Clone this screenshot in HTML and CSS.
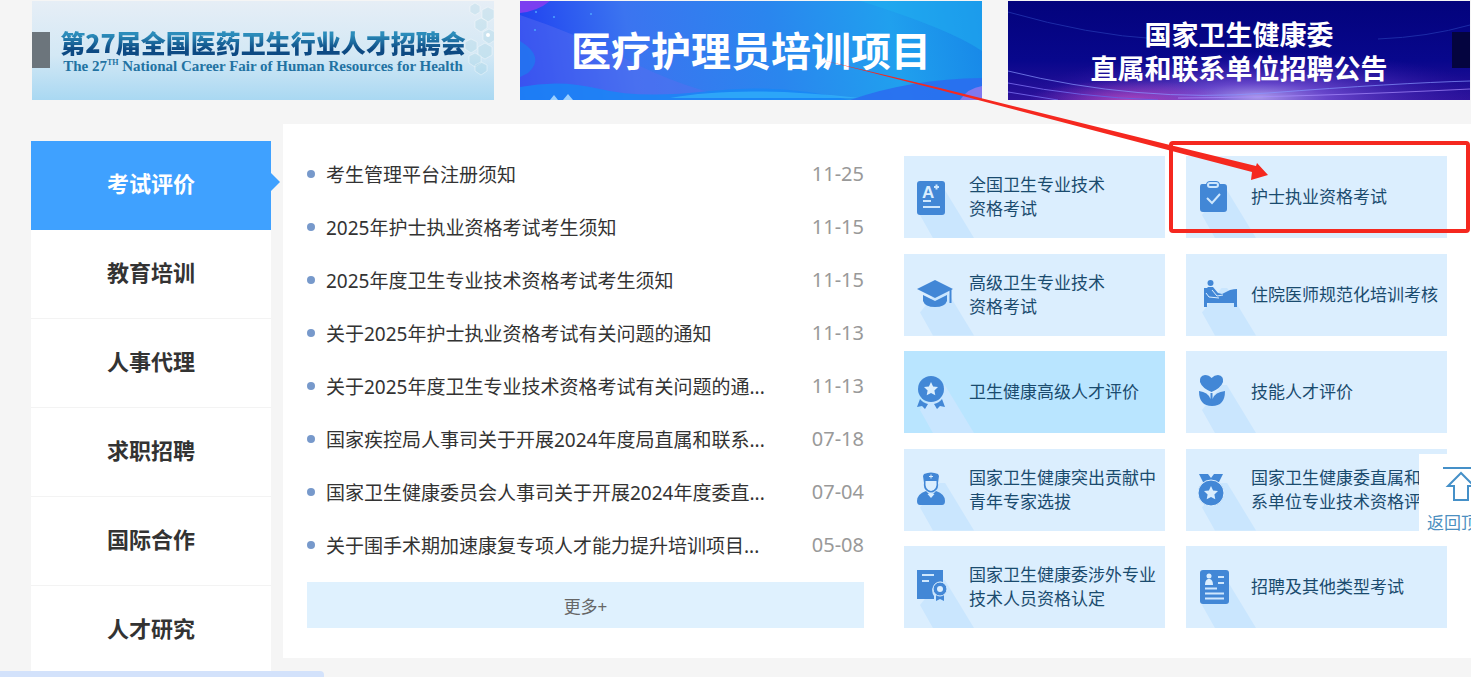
FILE: index.html
```html
<!DOCTYPE html>
<html lang="zh-CN">
<head>
<meta charset="utf-8">
<title>考试评价</title>
<link rel="stylesheet" href="styles.css">
</head>
<body>
<div class="page">
  <section class="banners">
    <a class="banner fair" href="#">
      <svg class="art" viewBox="0 0 462 99" preserveAspectRatio="none" aria-hidden="true">
        <g fill="#9ccfdf" fill-opacity=".25" stroke="#fff" stroke-opacity=".4">
          <path d="M456 6l6 3v8l-6 4-6-4V9z"/><path d="M449 17l6 3v7l-6 4-6-4v-7z"/><path d="M457 28l6 3v8l-6 4-6-4v-8z"/>
          <path d="M439 38l6 3v7l-6 4-6-4v-7z"/><path d="M453 42l7 4v8l-7 4-7-4v-8z"/><path d="M443 52l6 3v7l-6 4-6-4v-7z"/><path d="M449 61l6 3v6l-6 4-6-4v-6z"/>
          <path d="M443 2l5 3v6l-5 3-5-3V5z"/>
        </g>
        <circle cx="456" cy="34" r="2" fill="#fff"/>
      </svg>
      <span class="prev"></span>
      <strong class="fair-title">第27届全国医药卫生行业人才招聘会</strong>
      <span class="fair-sub">The 27<sup>TH</sup> National Career Fair of Human Resources for Health</span>
    </a>
    <a class="banner nursing" href="#">
      <svg class="art" viewBox="0 0 462 99" preserveAspectRatio="none" aria-hidden="true">
        <path d="M0 14Q60 34 110 60T220 99H0z" fill="#5a6cf0" opacity=".45"/>
        <path d="M0 0h30Q18 10 0 12z" fill="#7b3ff0"/>
        <path d="M0 40q26 16 8 32l-8 4z" fill="#1c7cf0" opacity=".7"/>
        <path d="M0 86Q40 78 80 88T190 90T330 99H0z" fill="#1687f6" opacity=".8"/>
        <path d="M150 97Q220 84 340 97z" fill="#35b4fa" opacity=".7"/>
        <path d="M330 99Q390 78 462 77v22z" fill="#2a6ef0" opacity=".9"/>
        <path d="M440 99q8-12 22-14v14z" fill="#7f78f0"/>
        <path d="M462 0v50Q430 28 340 0z" fill="#1faff0" opacity=".5"/>
        <path d="M30 99l4-5 4 5zM43 99l5-6 5 6z" fill="#9cd0ff"/>
        <g fill="#4da4ff"><circle cx="16" cy="11" r="1"/><circle cx="34" cy="16" r="1"/><circle cx="15" cy="29" r="1"/><circle cx="71" cy="13" r="1"/></g>
      </svg>
      <strong class="nursing-title">医疗护理员培训项目</strong>
    </a>
    <a class="banner recruit" href="#">
      <svg class="art" viewBox="0 0 462 99" preserveAspectRatio="none" aria-hidden="true">
        <defs>
          <radialGradient id="glow" cx=".5" cy=".5" r=".5"><stop offset="0" stop-color="#cbbcff"/><stop offset=".3" stop-color="#8a62e6" stop-opacity=".8"/><stop offset="1" stop-color="#3a17b0" stop-opacity="0"/></radialGradient>
          <radialGradient id="pink" cx=".5" cy=".5" r=".5"><stop offset="0" stop-color="#c04ac0"/><stop offset="1" stop-color="#b13fc0" stop-opacity="0"/></radialGradient>
        </defs>
        <ellipse cx="250" cy="96" rx="230" ry="46" fill="url(#glow)" opacity=".8"/>
        <ellipse cx="120" cy="99" rx="100" ry="20" fill="url(#pink)" opacity=".8"/>
        <g fill="none">
          <path d="M0 11Q80 34 150 38M462 24Q420 36 370 38" stroke="#1c2ba6"/>
          <path d="M0 70Q130 102 260 92T462 80" stroke="#8796ff" opacity=".7"/>
          <path d="M0 82Q70 96 150 99M0 91l50 8" stroke="#6a5ce0"/>
          <path d="M170 97Q300 96 462 88" stroke="#a88cff" opacity=".7"/>
        </g>
      </svg>
      <strong class="recruit-title">国家卫生健康委<br>直属和联系单位招聘公告</strong>
      <span class="next"></span>
    </a>
  </section>

  <main class="main">
    <nav class="side">
      <a class="side-item active" href="#">考试评价</a>
      <a class="side-item" href="#">教育培训</a>
      <a class="side-item" href="#">人事代理</a>
      <a class="side-item" href="#">求职招聘</a>
      <a class="side-item" href="#">国际合作</a>
      <a class="side-item" href="#">人才研究</a>
    </nav>
    <section class="panel">
      <div class="news">
        <ul class="news-list">
          <li><a href="#">考生管理平台注册须知</a><time>11-25</time></li>
          <li><a href="#">2025年护士执业资格考试考生须知</a><time>11-15</time></li>
          <li><a href="#">2025年度卫生专业技术资格考试考生须知</a><time>11-15</time></li>
          <li><a href="#">关于2025年护士执业资格考试有关问题的通知</a><time>11-13</time></li>
          <li><a href="#">关于2025年度卫生专业技术资格考试有关问题的通...</a><time>11-13</time></li>
          <li><a href="#">国家疾控局人事司关于开展2024年度局直属和联系...</a><time>07-18</time></li>
          <li><a href="#">国家卫生健康委员会人事司关于开展2024年度委直...</a><time>07-04</time></li>
          <li><a href="#">关于围手术期加速康复专项人才能力提升培训项目...</a><time>05-08</time></li>
        </ul>
        <a class="more" href="#">更多+</a>
      </div>
      <div class="tiles">
        <a class="tile" href="#">
          <svg class="icon" viewBox="0 0 40 40" aria-hidden="true"><rect x="1" y="4" width="28" height="34" rx="3"/><text class="grade" x="6" y="21">A</text><g class="line"><path d="M18 10h5M20.500 7.500v5M7 24h8M7 30h17"/></g></svg>
          <span>全国卫生专业技术<br>资格考试</span>
        </a>
        <a class="tile" href="#">
          <svg class="icon" viewBox="0 0 40 40" aria-hidden="true"><path d="M4 7h4q1-3 4-3h6q3 0 4 3h4q3 0 3 3v22q0 3-3 3H5q-3 0-3-3V10q0-3 2-3z"/><rect class="line" x="10" y="6" width="10" height="4" rx="2"/><path class="line" d="M9 21l5 5 8-9"/></svg>
          <span>护士执业资格考试</span>
        </a>
        <a class="tile" href="#">
          <svg class="icon" viewBox="0 0 40 40" aria-hidden="true"><path d="M1 14L19 5l18 9-18 9z"/><path d="M7 20l12 6 12-6v6q-2 6-12 6T7 26z"/><path class="ink" d="M34.500 14v14"/></svg>
          <span>高级卫生专业技术<br>资格考试</span>
        </a>
        <a class="tile" href="#">
          <svg class="icon" viewBox="0 0 40 40" aria-hidden="true"><circle cx="12.500" cy="8" r="3"/><path d="M6 13h3l1-1h5l5 6 4 1 8-4q4-1 7-1v18h-3v-4H9v4H6z"/><path class="thin" d="M14 15l5 6 6-1M8 18l3 4 10 1"/></svg>
          <span>住院医师规范化培训考核</span>
        </a>
        <a class="tile highlight" href="#">
          <svg class="icon" viewBox="0 0 40 40" aria-hidden="true"><circle cx="15" cy="17" r="13"/><path class="hole" d="M15 10l2.100 4.500 4.900.6-3.600 3.300.9 4.900-4.300-2.400-4.300 2.400.9-4.900L8 15.100l4.900-.6z"/><path d="M4 27q3 4 8 5l-3 5-3-3-5 1zM26 27q-3 4-8 5l3 5 3-3 5 1z"/></svg>
          <span>卫生健康高级人才评价</span>
        </a>
        <a class="tile" href="#">
          <svg class="icon" viewBox="0 0 40 40" aria-hidden="true"><path d="M13.500 6q3-3 6.500-3 6 1 5 7-2 6-11.500 10Q4 16 2 10 1 4 7 3q4 0 6.500 3z"/><path d="M1 19q9 1 11.500 8v-6h2v6Q17 20 27 19q0 15-13 15T1 19z"/></svg>
          <span>技能人才评价</span>
        </a>
        <a class="tile" href="#">
          <svg class="icon" viewBox="0 0 40 40" aria-hidden="true"><path d="M8 4q7-3 14 0l1 2-1 7q1 5-3 8-4 3-8 0-4-3-3-8L7 6z"/><path class="hole" d="M9.500 11h11q1 9-5.500 10-6.500-1-5.500-10z"/><path class="thin" d="M15 4.500v4M13 6.500h4"/><path d="M10 21l5 5 5-5q9 3 9 10 0 4-3 4H4q-3 0-3-4 0-7 9-10z"/><path class="hole" d="M11.500 24h7L15 28z"/></svg>
          <span>国家卫生健康突出贡献中<br>青年专家选拔</span>
        </a>
        <a class="tile" href="#">
          <svg class="icon" viewBox="0 0 40 40" aria-hidden="true"><path d="M1 4h9l3 4 3-4h9l-4 8H5z"/><circle class="ring" cx="13" cy="23" r="13"/><path class="hole" d="M13 16l2.100 4.500 4.900.6-3.600 3.300.9 4.900-4.300-2.400-4.300 2.400.9-4.900L6 21.100l4.900-.6z"/></svg>
          <span>国家卫生健康委直属和联<br>系单位专业技术资格评审</span>
        </a>
        <a class="tile" href="#">
          <svg class="icon" viewBox="0 0 40 40" aria-hidden="true"><path d="M1 3h26v12a9 9 0 0 0-9 14v3H1z"/><path class="line" d="M6 8h12M6 14h7"/><path d="M20 27h8v7l-4-2-4 2z"/><circle class="ring" cx="24" cy="22" r="7"/><circle class="hole" cx="24" cy="22" r="3"/></svg>
          <span>国家卫生健康委涉外专业<br>技术人员资格认定</span>
        </a>
        <a class="tile" href="#">
          <svg class="icon" viewBox="0 0 40 40" aria-hidden="true"><rect x="2" y="3" width="29" height="34" rx="3"/><circle class="hole" cx="11" cy="9" r="2.500"/><path class="hole" d="M7 18q0-5 3-6h2q3 1 3 6z"/><path class="line" d="M20 10h6M20 16h6M7 21.500h12M7 26.500h19M7 31.500h19"/></svg>
          <span>招聘及其他类型考试</span>
        </a>
      </div>
    </section>
  </main>
</div>

<svg class="marker" viewBox="0 0 1471 240" aria-hidden="true">
  <rect x="1171" y="143" width="297" height="88" rx="2"/>
  <path d="M822 60L940 88 1170 145 1256 166 1257 163 1268 175 1251 180 1252 172 1168 150 940 90z"/>
</svg>

<a class="to-top" href="#">
  <svg viewBox="0 0 36 38" aria-hidden="true"><path d="M0 2h36M18 7L5 20h6v14h14V20h6z"/></svg>
  <span>返回顶部</span>
</a>
<div class="status"></div>
</body>
</html>
```
FILE: styles.css
```css
* { box-sizing: border-box; }

body {
  margin: 0;
  background: #f5f5f5;
  color: #333;
  font-family: "Noto Sans", "Noto Sans CJK SC", sans-serif;
}

a { color: inherit; text-decoration: none; }

.banners {
  display: grid;
  grid-template-columns: repeat(3, 1fr);
  gap: 26px;
  padding: 1px 1px 24px 32px;
}

.banner {
  position: relative;
  display: flex;
  flex-direction: column;
  align-items: center;
  justify-content: center;
  height: 99px;
  overflow: hidden;
  font-family: "Noto Sans CJK SC", sans-serif;
  text-align: center;
}

.art { position: absolute; inset: 0; width: 100%; height: 100%; }
.banner strong, .fair-sub { position: relative; white-space: nowrap; }

.fair { background: linear-gradient(#e6eef6, #d3e8f5 55%, #a9d8f2); }

.fair-title {
  background: linear-gradient(#2c8dbb 25%, #0d4a83 75%);
  background-clip: text;
  color: transparent;
  font-size: 25px;
  font-weight: 900;
  line-height: 30px;
}

.fair-sub {
  color: #2272a2;
  font: bold 15px/18px "Liberation Serif", serif;
}

.fair-sub sup { font-size: 8px; line-height: 8px; }

.prev, .next { position: absolute; top: 31px; height: 36px; width: 18px; }
.prev { left: 0; background: #6c757c; }
.next { right: 0; background: #04043f; }

.nursing { padding-bottom: 4px; background: linear-gradient(80deg, #1d3df0, #3b74f0 25%, #2a86ee 55%, #20a0ee 80%, #1787e8); }
.nursing-title { color: #fff; font-size: 40px; font-weight: 700; line-height: 48px; }

.recruit { background: linear-gradient(#03037c, #08078c 60%, #2d129a); }
.recruit-title { color: #fff; font-size: 27px; font-weight: 700; line-height: 34px; }

.main { display: flex; align-items: flex-start; gap: 12px; padding-left: 31px; }

.side { flex: 0 0 240px; margin-top: 17px; background: #fff; }

.side-item {
  position: relative;
  display: flex;
  align-items: center;
  justify-content: center;
  height: 89px;
  padding-bottom: 6px;
  border-bottom: 1px solid #f3f3f3;
  font-size: 22px;
  font-weight: 700;
}

.side-item.active { border-color: #3fa1ff; background: #3fa1ff; color: #fff; }

.side-item.active::after {
  content: "";
  position: absolute;
  left: 100%;
  border: 9px solid transparent;
  border-left-color: #3fa1ff;
  border-right: 0;
}

.panel {
  flex: 1;
  display: flex;
  gap: 40px;
  min-width: 0;
  padding: 24px 24px 30px;
  background: #fff;
}

.news { flex: 557 1 0; min-width: 0; }
.news-list { margin: 0 0 10px; padding: 0; list-style: none; }

.news-list li {
  display: flex;
  align-items: center;
  height: 53px;
  padding-bottom: 2px;
  font-size: 19px;
}

.news-list li::before {
  content: "";
  flex: none;
  width: 8px;
  height: 8px;
  margin-right: 11px;
  border-radius: 50%;
  background: #7799cb;
}

.news-list a { flex: 1; white-space: nowrap; overflow: hidden; text-overflow: ellipsis; }
.news-list time { flex: none; color: #999; font-size: 20px; }

.more {
  display: flex;
  align-items: center;
  justify-content: center;
  height: 46px;
  background: #dff1fe;
  color: #666;
  font-size: 17px;
}

.tiles {
  flex: 543 1 0;
  display: grid;
  grid-template-columns: repeat(2, 1fr);
  column-gap: 21px;
  align-content: space-between;
  padding-top: 8px;
}

.tile {
  position: relative;
  display: flex;
  align-items: center;
  gap: 13px;
  height: 82px;
  padding-left: 12px;
  background: #dbeefe;
  color: #1a4b6e;
  font-size: 17px;
  line-height: 24px;
  white-space: nowrap;
}

.tile::before {
  content: "";
  position: absolute;
  left: 16px;
  bottom: 0;
  width: 54px;
  height: 48px;
  background: #cae6fe;
  clip-path: polygon(0 52%, 37% 0, 46% 0, 100% 100%, 24% 100%);
}

.tile.highlight { background: #b9e5ff; }
.tile.highlight::before { background: #c9e6ff; }
.tile span { position: relative; }

.icon { position: relative; flex: none; width: 40px; height: 40px; fill: #4287d6; }
.icon .hole { fill: #dbeefe; }
.icon .line { fill: none; stroke: #cfe7fd; stroke-width: 2; }
.icon .thin { fill: none; stroke: #dbeefe; stroke-width: 1; }
.icon .ink { fill: none; stroke: #4287d6; stroke-width: 2; }
.icon .ring { stroke: #dbeefe; stroke-width: 1; }
.icon .grade { fill: #dbeefe; font: bold 17px "Liberation Sans", sans-serif; }

.marker { position: absolute; left: 0; top: 0; width: 1471px; height: 240px; fill: #f5281f; pointer-events: none; }
.marker rect { fill: none; stroke: #f5281f; stroke-width: 4; }

.to-top {
  position: fixed;
  right: -32px;
  bottom: 131px;
  display: flex;
  flex-direction: column;
  align-items: center;
  gap: 6px;
  width: 84px;
  padding: 12px 0 10px;
  background: #fff;
  color: #4c8fc0;
  font-size: 17px;
  line-height: 26px;
}

.to-top svg { width: 36px; height: 38px; fill: none; stroke: #4590c8; stroke-width: 2; }

.status {
  position: fixed;
  left: 0;
  bottom: 0;
  width: 324px;
  height: 6px;
  border-top-right-radius: 4px;
  background: #d3e2fb;
}
```
